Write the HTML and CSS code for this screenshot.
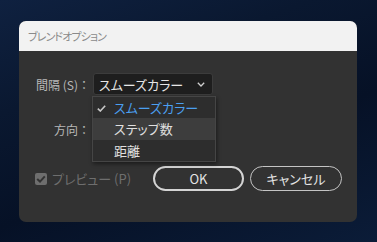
FILE: index.html
```html
<!DOCTYPE html>
<html lang="ja">
<head>
<meta charset="utf-8">
<link rel="stylesheet" href="styles.css">
</head>
<body>
<div class="dialog">
  <div class="titlebar">ブレンドオプション</div>
  <div class="content">
    <div class="row">
      <span class="label">間隔 (S)：</span>
      <div class="select-wrap">
        <div class="select">
          <span>スムーズカラー</span>
          <svg class="chev" width="8" height="5" viewBox="0 0 8 5"><path d="M0.8 0.8 L4 4 L7.2 0.8" fill="none" stroke="#d0d0d0" stroke-width="1.3"/></svg>
        </div>
        <ul class="menu">
          <li class="item selected"><svg class="check" width="9" height="7" viewBox="0 0 9 7"><path d="M0.8 3.6 L3.3 6 L8.2 0.8" fill="none" stroke="#c8c8c8" stroke-width="1.6"/></svg>スムーズカラー</li>
          <li class="item hover">ステップ数</li>
          <li class="item">距離</li>
        </ul>
      </div>
    </div>
    <div class="row row2">
      <span class="label">方向：</span>
    </div>
    <div class="footer">
      <label class="preview">
        <span class="cb"><svg width="10" height="8" viewBox="0 0 10 8"><path d="M1.2 4 L4 6.6 L8.8 1.4" fill="none" stroke="#333" stroke-width="2"/></svg></span>
        <span class="pv-text">プレビュー (P)</span>
      </label>
      <div class="buttons">
        <button class="btn ok">OK</button>
        <button class="btn cancel">キャンセル</button>
      </div>
    </div>
  </div>
</div>
</body>
</html>
```
FILE: styles.css
```css
* { box-sizing: border-box; }
html, body { margin: 0; padding: 0; }
body {
  width: 377px;
  height: 242px;
  overflow: hidden;
  background: linear-gradient(160deg, #0f2140 0%, #0a1830 30%, #061126 60%, #0b1c38 100%);
  font-family: "Noto Sans CJK JP", "Noto Sans", sans-serif;
  font-feature-settings: "palt";
  padding: 21px 0 0 19px;
}
.dialog {
  width: 338px;
  height: 201px;
  background: #323232;
  border-radius: 7px;
  overflow: hidden;
}
.titlebar {
  height: 30px;
  background: #f2f2f2;
  color: #8a8a8a;
  font-size: 11px;
  letter-spacing: -0.9px;
  line-height: 30px;
  padding-left: 9px;
}
.content {
  padding-top: 22px;
}
.row {
  display: flex;
  align-items: center;
  height: 22px;
}
.label {
  width: 74px;
  padding-right: 3px;
  text-align: right;
  color: #b8b8b8;
  font-size: 12px;
  font-feature-settings: normal;
}
.row2 { margin-top: 23px; }
.select-wrap { position: relative; }
.select {
  width: 120px;
  height: 22px;
  background: #1e1e1e;
  border: 1px solid #3c3c3c;
  border-radius: 3px;
  display: flex;
  align-items: center;
  justify-content: space-between;
  padding: 0 7px 0 5px;
  color: #e6e6e6;
  font-size: 13px;
}
.chev { margin-top: 1px; }
.menu {
  position: absolute;
  left: -1px;
  top: 23px;
  width: 124px;
  margin: 0;
  padding: 0;
  list-style: none;
  background: #2d2d2d;
  border: 1px solid #454545;
  box-shadow: 1px 2px 4px rgba(0,0,0,0.45);
}
.item {
  height: 21.3px;
  display: flex;
  align-items: center;
  padding-left: 21px;
  color: #e0e0e0;
  font-size: 13px;
  position: relative;
}
.item.selected { color: #4b9ff0; }
.item.hover { background: #3d3d3d; }
.check { position: absolute; left: 4px; top: 8px; }
.footer {
  margin-top: 26px;
  height: 25px;
  display: flex;
  align-items: center;
  padding: 0 15px 0 16px;
}
.preview {
  display: flex;
  align-items: center;
  color: #6e6e6e;
  font-size: 13px;
}
.cb {
  width: 12px;
  height: 12px;
  border-radius: 2px;
  background: #6e6e6e;
  display: flex;
  align-items: center;
  justify-content: center;
  margin-right: 5px;
}
.buttons {
  margin-left: auto;
  display: flex;
  gap: 6px;
}
.btn {
  height: 25px;
  border-radius: 13px;
  background: transparent;
  color: #e4e4e4;
  font-family: "Noto Sans CJK JP", "Noto Sans", sans-serif;
  font-feature-settings: "palt";
  font-size: 13px;
  padding: 0;
}
.ok {
  width: 91px;
  border: 2px solid #d4d4d4;
}
.cancel {
  width: 92px;
  border: 1px solid #c4c4c4;
}
```
